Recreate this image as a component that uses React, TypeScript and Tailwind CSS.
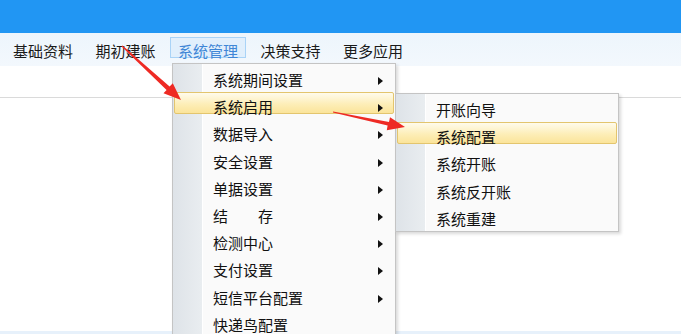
import React from "react";

const font = { fontFamily: '"Noto Sans CJK SC", "Noto Sans", sans-serif' };

type Item = { label: string; sub?: boolean; active?: boolean };

const mainItems: Item[] = [
  { label: "系统期间设置", sub: true },
  { label: "系统启用", sub: true, active: true },
  { label: "数据导入", sub: true },
  { label: "安全设置", sub: true },
  { label: "单据设置", sub: true },
  { label: "结　　存", sub: true },
  { label: "检测中心", sub: true },
  { label: "支付设置", sub: true },
  { label: "短信平台配置", sub: true },
  { label: "快递鸟配置" },
];

const subItems: Item[] = [
  { label: "开账向导" },
  { label: "系统配置", active: true },
  { label: "系统开账" },
  { label: "系统反开账" },
  { label: "系统重建" },
];

function Row({ item, gutter }: { item: Item; gutter: number }) {
  return (
    <div
      className={
        "flex h-[22px] mb-[5.2px] mx-[1px] items-start rounded-[2px] border " +
        (item.active
          ? "border-[#e3c56e] bg-[linear-gradient(to_bottom,#fffbec,#fdeeb8_55%,#fbe49a)]"
          : "border-transparent")
      }
    >
      <span
        className="leading-[22px] pt-[3px] text-[15px] text-[#111] whitespace-pre"
        style={{ paddingLeft: gutter }}
      >
        {item.label}
      </span>
      {item.sub && (
        <span className="ml-auto mr-[10px] mt-[11px] w-0 h-0 border-y-[4px] border-y-transparent border-l-[5px] border-l-[#111]" />
      )}
    </div>
  );
}

export default function App() {
  const menus = ["基础资料", "期初建账", "系统管理", "决策支持", "更多应用"];
  return (
    <div
      className="relative w-[681px] h-[334px] overflow-hidden bg-white flex flex-col"
      style={font}
    >
      <div className="h-[33px] bg-[#2196f3]" />
      <div className="h-[33px] bg-[linear-gradient(to_bottom,#edf5fc,#f3f8fd)] flex items-start pt-[4px] pl-[5px] gap-[6.5px]">
        {menus.map((m, i) => (
          <div
            key={m}
            className={
              "h-[21px] px-[7px] border flex items-center text-[15px] leading-none " +
              (i === 2
                ? "border-[#a9d3f7] bg-[#e1effc] text-[#3f86d6]"
                : "border-transparent text-[#1a1a1a]")
            }
          >
            <span className="pt-[5px]">{m}</span>
          </div>
        ))}
      </div>
      <div className="h-[32px] bg-white border-b border-[#dadada]" />
      <div className="flex-1 bg-white" />
      <div className="h-[3px] bg-[#e7f1fb]" />

      {/* main dropdown */}
      <div className="absolute left-[172px] top-[63px] w-[224px] h-[300px] border border-[#c4c4c4] pt-[1px] shadow-[2px_2px_3px_rgba(0,0,0,0.15)] bg-[linear-gradient(to_right,#dee3e8_0px,#e9edf0_29px,#ffffff_29px,#ffffff_30px,#fafafa_30px)]">
        {mainItems.map((it) => (
          <Row key={it.label} item={it} gutter={38} />
        ))}
      </div>

      {/* sub menu */}
      <div className="absolute left-[395px] top-[93px] w-[224px] h-[139px] border border-[#c4c4c4] pt-[1px] shadow-[2px_2px_3px_rgba(0,0,0,0.15)] bg-[linear-gradient(to_right,#dee3e8_0px,#e9edf0_29px,#ffffff_29px,#ffffff_30px,#fafafa_30px)]">
        {subItems.map((it) => (
          <Row key={it.label} item={it} gutter={38} />
        ))}
      </div>

      {/* red annotation arrows */}
      <svg
        className="absolute left-0 top-0 pointer-events-none"
        width={681}
        height={334}
        viewBox="0 0 681 334"
      >
        <polygon
          fill="#ee2a24"
          points="121.5,46.6 166.6,89.9 163.5,93.3 181,100 172.8,83.2 169.6,86.6 122.5,45.4"
        />
        <polygon
          fill="#ee2a24"
          points="332.9,112.6 387.6,125.6 386.8,130.3 405,127 390.0,117.2 389.0,121.9 333.1,111.4"
        />
      </svg>
    </div>
  );
}
